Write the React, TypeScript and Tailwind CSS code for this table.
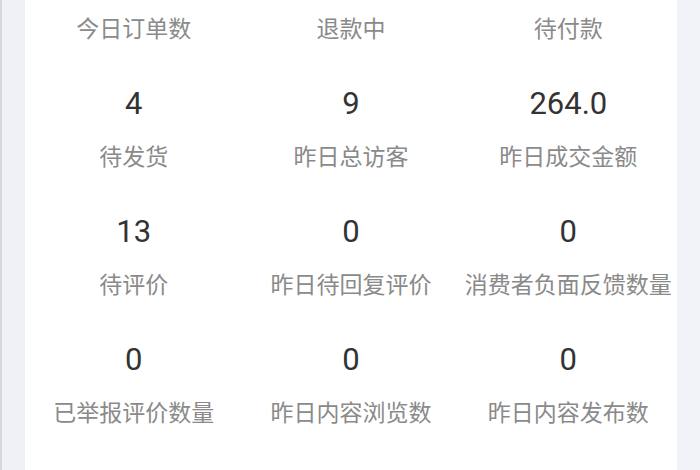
const stats: { value?: string; label: string }[] = [
  { label: "今日订单数" },
  { label: "退款中" },
  { label: "待付款" },
  { value: "4", label: "待发货" },
  { value: "9", label: "昨日总访客" },
  { value: "264.0", label: "昨日成交金额" },
  { value: "13", label: "待评价" },
  { value: "0", label: "昨日待回复评价" },
  { value: "0", label: "消费者负面反馈数量" },
  { value: "0", label: "已举报评价数量" },
  { value: "0", label: "昨日内容浏览数" },
  { value: "0", label: "昨日内容发布数" },
];

const StatCell = ({ value, label }: { value?: string; label: string }) => {
  // top row is scrolled past its numbers, only the labels are in view
  if (value === undefined) {
    return (
      <div className="h-[66px] flex flex-col items-center pt-[11px]">
        <span className="h-[32px] leading-[32px] text-[23px] text-[#8a8a8a] whitespace-nowrap font-['Noto_Sans_CJK_SC',sans-serif]">
          {label}
        </span>
      </div>
    );
  }
  return (
    <div className="h-[128px] flex flex-col items-center pt-[18px]">
      <span className="h-[40px] leading-[40px] text-[31px] text-[#333333] font-['Roboto',sans-serif]">
        {value}
      </span>
      <span className="mt-[15px] h-[32px] leading-[32px] text-[23px] text-[#8a8a8a] whitespace-nowrap font-['Noto_Sans_CJK_SC',sans-serif]">
        {label}
      </span>
    </div>
  );
};

const App = () => {
  return (
    <div className="h-[470px] w-[700px] overflow-hidden flex bg-[#f1f2f7]">
      <div className="w-[25px] shrink-0 border-l-2 border-[#d6d7dd] bg-[#f0f1f6]" />
      <div className="flex-1 bg-white overflow-hidden">
        <div className="grid grid-cols-3">
          {stats.map((s) => (
            <StatCell key={s.label} value={s.value} label={s.label} />
          ))}
        </div>
      </div>
      <div className="w-[23px] shrink-0 bg-[#f2f3f8]" />
    </div>
  );
};

export default App;
